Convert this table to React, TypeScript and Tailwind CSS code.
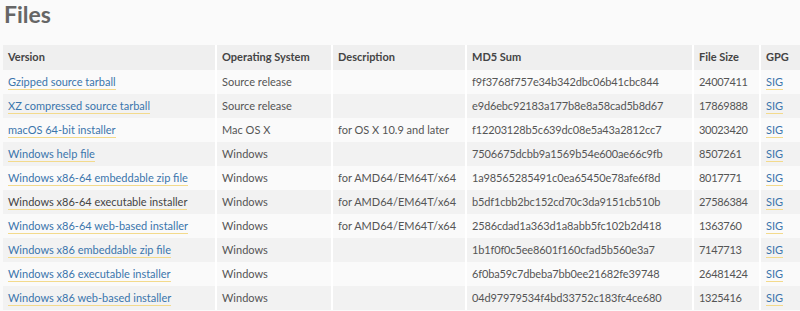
import { FC } from 'react';

interface FileRow {
  version: string;
  os: string;
  description: string;
  md5: string;
  size: string;
  visited?: boolean;
}

const rows: FileRow[] = [
  { version: 'Gzipped source tarball', os: 'Source release', description: '', md5: 'f9f3768f757e34b342dbc06b41cbc844', size: '24007411' },
  { version: 'XZ compressed source tarball', os: 'Source release', description: '', md5: 'e9d6ebc92183a177b8e8a58cad5b8d67', size: '17869888' },
  { version: 'macOS 64-bit installer', os: 'Mac OS X', description: 'for OS X 10.9 and later', md5: 'f12203128b5c639dc08e5a43a2812cc7', size: '30023420' },
  { version: 'Windows help file', os: 'Windows', description: '', md5: '7506675dcbb9a1569b54e600ae66c9fb', size: '8507261' },
  { version: 'Windows x86-64 embeddable zip file', os: 'Windows', description: 'for AMD64/EM64T/x64', md5: '1a98565285491c0ea65450e78afe6f8d', size: '8017771' },
  { version: 'Windows x86-64 executable installer', os: 'Windows', description: 'for AMD64/EM64T/x64', md5: 'b5df1cbb2bc152cd70c3da9151cb510b', size: '27586384', visited: true },
  { version: 'Windows x86-64 web-based installer', os: 'Windows', description: 'for AMD64/EM64T/x64', md5: '2586cdad1a363d1a8abb5fc102b2d418', size: '1363760' },
  { version: 'Windows x86 embeddable zip file', os: 'Windows', description: '', md5: '1b1f0f0c5ee8601f160cfad5b560e3a7', size: '7147713' },
  { version: 'Windows x86 executable installer', os: 'Windows', description: '', md5: '6f0ba59c7dbeba7bb0ee21682fe39748', size: '26481424' },
  { version: 'Windows x86 web-based installer', os: 'Windows', description: '', md5: '04d97979534f4bd33752c183fc4ce680', size: '1325416' },
];

// column widths measured off the screenshot (cell incl. the white divider)
const grid = 'grid grid-cols-[214px_116px_134px_227px_67px_36px]';
const cell = 'flex items-center pl-[5px] border-r-2 border-white';

const Link: FC<{ children: string; dark?: boolean }> = ({ children, dark }) => (
  <span
    className={`leading-[13px] pb-[1px] mt-[1px] border-b border-[#f3da8c] ${dark ? 'text-[#444]' : 'text-[#3a75ac]'}`}
  >
    {children}
  </span>
);

export default function App() {
  return (
    <div className="w-[800px] h-[311px] overflow-hidden bg-[#fafafa] font-['Lato',sans-serif] text-[#555] text-[11px]">
      <h1 className="pl-[4px] pt-[2px] h-[45px] text-[23px] leading-[24px] font-bold text-[#666]">Files</h1>
      <div className="ml-[3px]">
        <div className={`${grid} h-[25px] bg-[#efefef] font-bold text-[#444]`}>
          <div className={cell}>Version</div>
          <div className={cell}>Operating System</div>
          <div className={cell}>Description</div>
          <div className={cell}>MD5 Sum</div>
          <div className={cell}>File Size</div>
          <div className="flex items-center pl-[5px]">GPG</div>
        </div>
        {rows.map((r, i) => (
          <div key={r.version} className={`${grid} h-[24px] ${i % 2 ? 'bg-[#f2f2f2]' : 'bg-[#fafafa]'}`}>
            <div className={cell}>
              <Link dark={r.visited}>{r.version}</Link>
            </div>
            <div className={cell}>{r.os}</div>
            <div className={cell}>{r.description}</div>
            <div className={`${cell} tracking-[-0.15px]`}>{r.md5}</div>
            <div className={`${cell} tracking-[-0.3px]`}>{r.size}</div>
            <div className="flex items-center pl-[5px]">
              <Link>SIG</Link>
            </div>
          </div>
        ))}
      </div>
    </div>
  );
}
